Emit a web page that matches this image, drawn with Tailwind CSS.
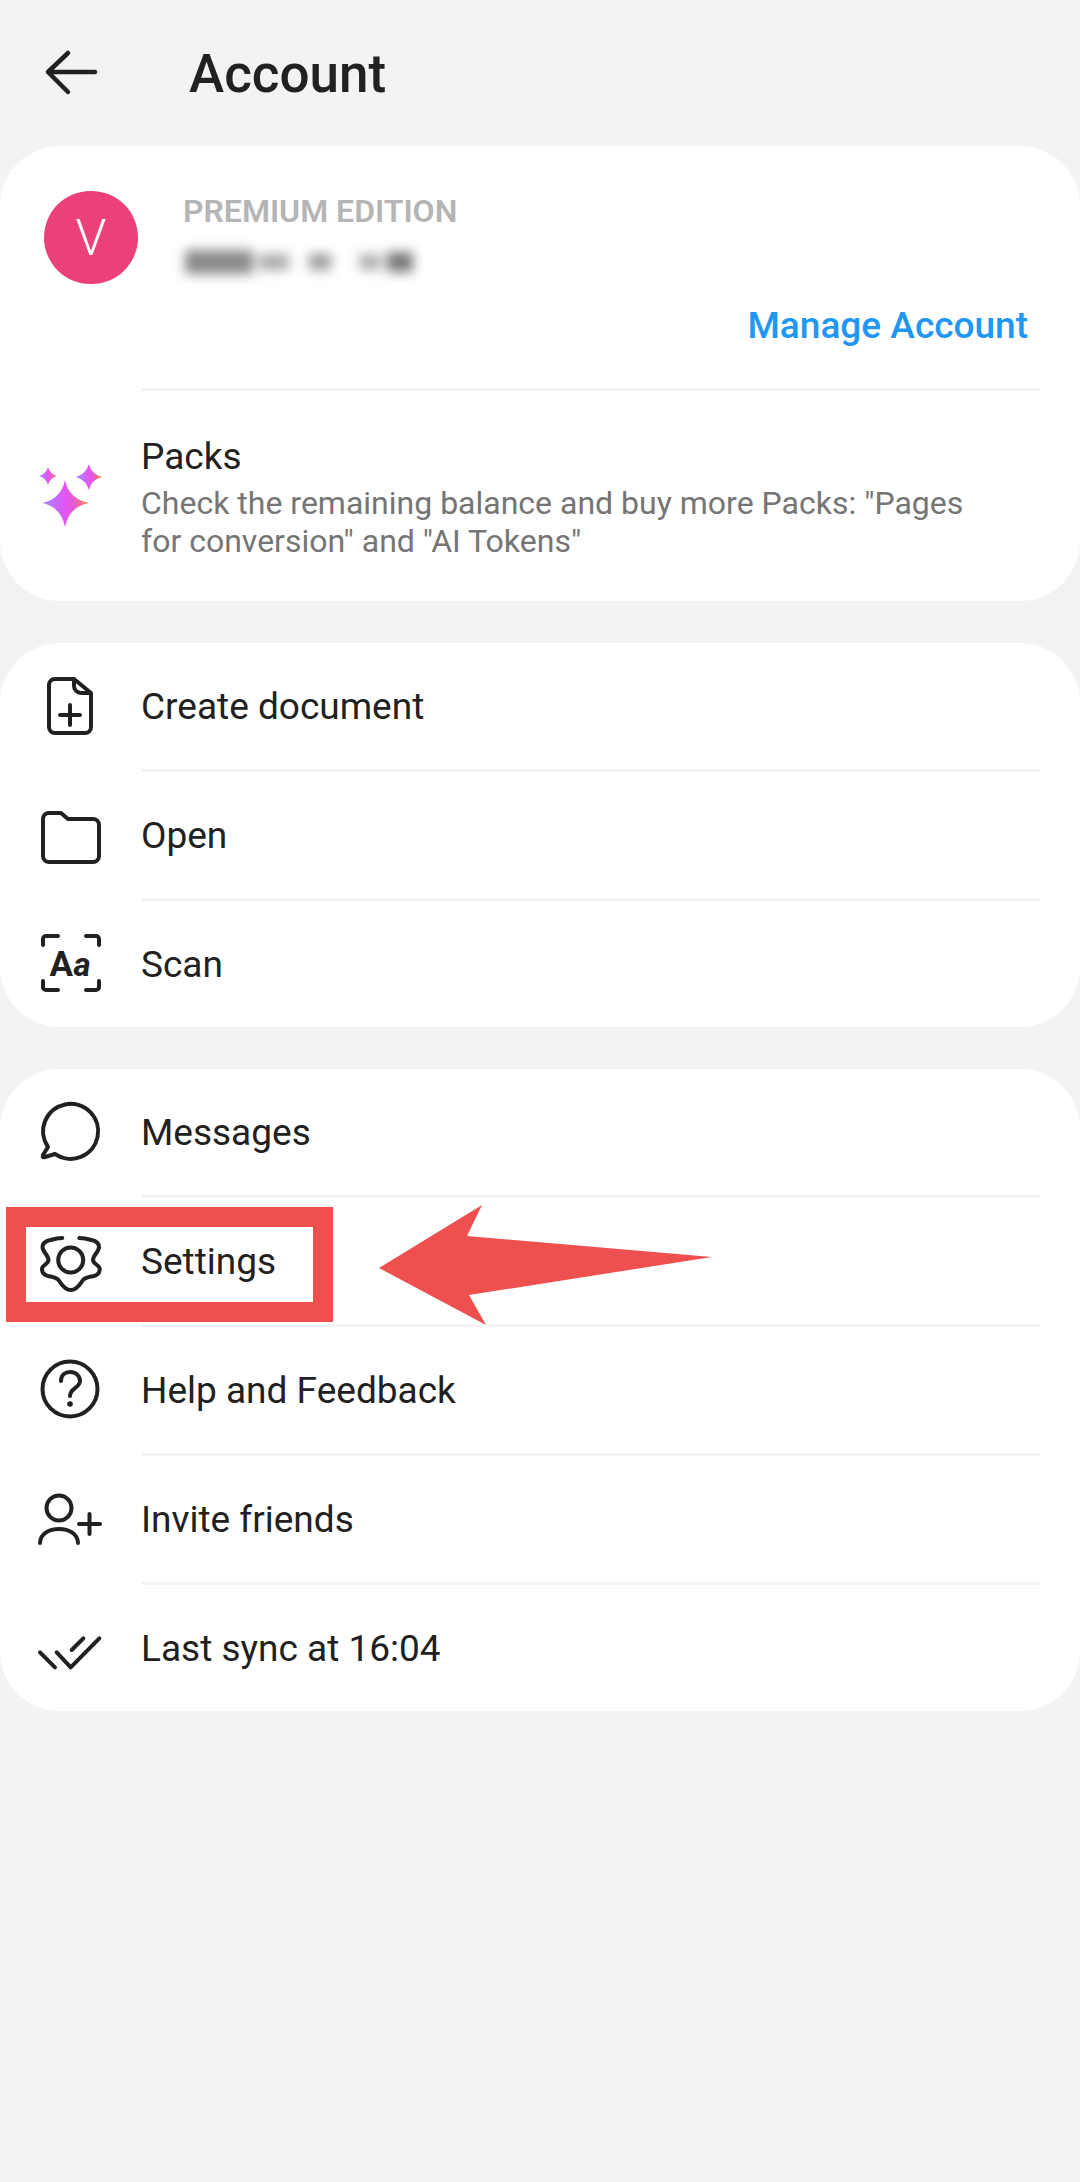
<!DOCTYPE html>
<html lang="en">
<head>
<meta charset="utf-8">
<title>Account</title>
<script src="https://cdn.jsdelivr.net/npm/@tailwindcss/browser@4"></script>
</head>
<body class="m-0">
<div class="relative w-[1080px] h-[2182px] overflow-hidden bg-[#f3f3f3] font-[Roboto,sans-serif] text-[#212121]">

  <header class="h-[146px] flex items-start">
    <svg class="w-[142px] h-[146px] shrink-0" viewBox="0 0 142 146" fill="none" stroke="#212121" stroke-width="4.500" stroke-linecap="round" stroke-linejoin="round"><path d="M95 72H48M68 53L48 72L68 92"/></svg>
    <h1 class="ml-[47px] mt-[43px] text-[53px] leading-[62px] font-medium">Account</h1>
  </header>

  <section class="bg-white rounded-[60px] h-[455px]">
    <div class="h-[242px] relative flex flex-col">
      <div class="flex items-start pl-[44px] pt-[45px]">
        <div class="w-[94px] h-[93px] rounded-full bg-[#ec407a] flex items-center justify-center text-white text-[50px] leading-none font-light">V</div>
        <div class="ml-[45px]">
          <div class="text-[32px] leading-[38px] font-semibold text-[#b5b5b5] mt-[1px]">PREMIUM EDITION</div>
          <div class="flex items-center gap-[6px] h-[30px] mt-[17px] ml-[2px] blur-[6px]">
            <span class="w-[68px] h-[24px] bg-[#8a8a8a]"></span><span class="w-[30px] h-[16px] bg-[#aaaaaa]"></span><span class="w-[22px] h-[16px] ml-[14px] bg-[#9a9a9a]"></span><span class="w-[22px] h-[16px] ml-[22px] bg-[#b0b0b0]"></span><span class="w-[26px] h-[20px] bg-[#777777]"></span>
          </div>
        </div>
      </div>
      <div class="mt-auto mb-[42px] pr-[52px] text-right text-[#2196f3] text-[37px] leading-[40px] font-medium">Manage Account</div>
    </div>
    <div class="h-[3px] ml-[142px] mr-[40px] bg-[#f3f3f3]"></div>
    <div class="flex items-start h-[210px]">
      <svg class="w-[141px] h-[210px] shrink-0" viewBox="0 0 141 210">
        <defs><linearGradient id="g1" x1="0" x2="1" y1="0" y2="0"><stop offset="0" stop-color="#a08cff"/><stop offset=".5" stop-color="#e155f5"/><stop offset=".72" stop-color="#e75fc0"/><stop offset="1" stop-color="#ff8a30"/></linearGradient></defs>
        <path fill="url(#g1)" d="M65 89Q69 108 89 112Q69 116 65 136Q61 116 42 112Q61 108 65 89Z"/>
        <path fill="url(#g1)" d="M48 76Q50 83 57 85Q50 87 48 94Q46 87 39 85Q46 83 48 76Z"/>
        <path fill="url(#g1)" d="M89 73Q91 83 102 86Q91 89 89 99Q86 89 76 86Q86 83 89 73Z"/>
      </svg>
      <div class="pt-[45px] pr-[100px]">
        <div class="text-[37px] leading-[42px]">Packs</div>
        <p class="m-0 mt-[6px] text-[32px] leading-[38px] text-[#757575]">Check the remaining balance and buy more Packs: "Pages for conversion" and "AI Tokens"</p>
      </div>
    </div>
  </section>

  <section class="mt-[42px] bg-white rounded-[60px]">
    <div class="h-[126px] flex items-center">
      <svg class="w-[100px] h-[100px] ml-[21px] mr-[20px] shrink-0" viewBox="-50 -50 100 100" fill="none" stroke="#212121" stroke-width="4" stroke-linecap="round" stroke-linejoin="round"><path d="M3 -27H-16a6 6 0 0 0 -6 6V21a6 6 0 0 0 6 6H14a6 6 0 0 0 6 -6V-13ZM3 -27V-20a7 7 0 0 0 7 7H20M-11 9H9M-1 -1V19"/></svg>
      <span class="text-[37px] leading-[42px] pt-[2px]">Create document</span>
    </div>
    <div class="h-[3px] ml-[142px] mr-[40px] bg-[#f3f3f3]"></div>
    <div class="h-[126px] flex items-center">
      <svg class="w-[100px] h-[100px] ml-[21px] mr-[20px] shrink-0" viewBox="-50 -50 100 100" fill="none" stroke="#212121" stroke-width="4" stroke-linecap="round" stroke-linejoin="round"><path d="M-23 -22H-10L-3 -16H22a6 6 0 0 1 6 6V21a6 6 0 0 1 -6 6H-22a6 6 0 0 1 -6 -6V-16a6 6 0 0 1 5 -6Z"/></svg>
      <span class="text-[37px] leading-[42px] pt-[2px]">Open</span>
    </div>
    <div class="h-[3px] ml-[142px] mr-[40px] bg-[#f3f3f3]"></div>
    <div class="h-[126px] flex items-center">
      <svg class="w-[100px] h-[100px] ml-[21px] mr-[20px] shrink-0" viewBox="-50 -50 100 100" fill="none" stroke="#212121" stroke-width="4" stroke-linecap="round" stroke-linejoin="round"><path d="M-28 -19V-25a3 3 0 0 1 3 -3H-13M15 -28H25a3 3 0 0 1 3 3V-19M-28 17V23a3 3 0 0 0 3 3H-13M15 26H25a3 3 0 0 0 3 -3V17"/><text x="-21.500" y="11.500" font-family="Roboto" font-weight="700" font-size="35" fill="#212121" stroke="none">A</text><text x="2.500" y="11.500" font-family="Roboto" font-weight="700" font-style="italic" font-size="33" fill="#212121" stroke="none">a</text></svg>
      <span class="text-[37px] leading-[42px] pt-[2px]">Scan</span>
    </div>
  </section>

  <section class="mt-[42px] bg-white rounded-[60px]">
    <div class="h-[126px] flex items-center">
      <svg class="w-[100px] h-[100px] ml-[21px] mr-[20px] shrink-0" viewBox="-50 -50 100 100" fill="none" stroke="#212121" stroke-width="4" stroke-linecap="round" stroke-linejoin="round"><path d="M-23 15A27.500 27.500 0 1 1 -16 22L-26 25Q-29 26 -28 23Z"/></svg>
      <span class="text-[37px] leading-[42px] pt-[2px]">Messages</span>
    </div>
    <div class="h-[3px] ml-[142px] mr-[40px] bg-[#f3f3f3]"></div>
    <div class="h-[126px] flex items-center">
      <svg class="w-[100px] h-[100px] ml-[21px] mr-[20px] shrink-0" viewBox="-50 -50 100 100" fill="none" stroke="#212121" stroke-width="4" stroke-linecap="round" stroke-linejoin="round"><circle cx="-0.300" cy="-1" r="12.500"/><path d="M-8.700 -23C-12 -23 -17 -22 -20.500 -21C-25 -20 -28.500 -18 -28.500 -14C-28.500 -9 -22.500 -6 -22.500 -1C-22.500 3 -29 4 -29 8C-29 12 -27 14 -23 15C-18 16 -15 16 -12.500 19C-10 22 -7 29 -0.300 29C6.500 29 9.500 22 12 19C14.500 16 18 16 23 15C27 14 28.700 12 28.700 8C28.700 4 22 3 22 -1C22 -6 28 -9 28 -14C28 -18 25 -20 20.500 -21C17 -22 12 -23 8.300 -23"/></svg>
      <span class="text-[37px] leading-[42px] pt-[2px]">Settings</span>
    </div>
    <div class="h-[3px] ml-[142px] mr-[40px] bg-[#f3f3f3]"></div>
    <div class="h-[126px] flex items-center">
      <svg class="w-[100px] h-[100px] ml-[21px] mr-[20px] shrink-0" viewBox="-50 -50 100 100" fill="none" stroke="#212121" stroke-width="4" stroke-linecap="round" stroke-linejoin="round"><circle cx="-1" cy="-1" r="27.500"/><path d="M-10 -9C-10 -15 -6 -18 -1 -18C5 -18 9 -14 9 -9C9 -2 -1 -2 -1 6"/><circle cx="-1" cy="14" r="2.800" fill="#212121" stroke="none"/></svg>
      <span class="text-[37px] leading-[42px] pt-[2px]">Help and Feedback</span>
    </div>
    <div class="h-[3px] ml-[142px] mr-[40px] bg-[#f3f3f3]"></div>
    <div class="h-[126px] flex items-center">
      <svg class="w-[100px] h-[100px] ml-[21px] mr-[20px] shrink-0" viewBox="-50 -50 100 100" fill="none" stroke="#212121" stroke-width="4" stroke-linecap="round" stroke-linejoin="round"><circle cx="-12" cy="-11" r="12.500"/><path d="M-31 24C-31 15 -22 10 -12 10C-2 10 7 15 7 24M8 5H29M18.500 -5V15"/></svg>
      <span class="text-[37px] leading-[42px] pt-[2px]">Invite friends</span>
    </div>
    <div class="h-[3px] ml-[142px] mr-[40px] bg-[#f3f3f3]"></div>
    <div class="h-[126px] flex items-center">
      <svg class="w-[100px] h-[100px] ml-[21px] mr-[20px] shrink-0" viewBox="-50 -50 100 100" fill="none" stroke="#212121" stroke-width="4" stroke-linecap="round" stroke-linejoin="round"><path d="M-31 4.300L-16 19.300M-14.300 4.300L-0.300 19.300L28.300 -9.700M0.700 2L12.300 -9.700"/></svg>
      <span class="text-[37px] leading-[42px] pt-[2px]">Last sync at 16:04</span>
    </div>
  </section>

  <div class="absolute left-[6px] top-[1207px] w-[327px] h-[115px] border-[20px] border-[#ee5050]"></div>
  <svg class="absolute left-[360px] top-[1190px] w-[370px] h-[150px]" viewBox="360 1190 370 150"><path d="M379 1268L482 1205L467 1236L712 1257L469 1295L486 1325Z" fill="#ee5050" stroke="#fff" stroke-width="7" stroke-linejoin="round" paint-order="stroke"/></svg>
</div>
</body>
</html>
